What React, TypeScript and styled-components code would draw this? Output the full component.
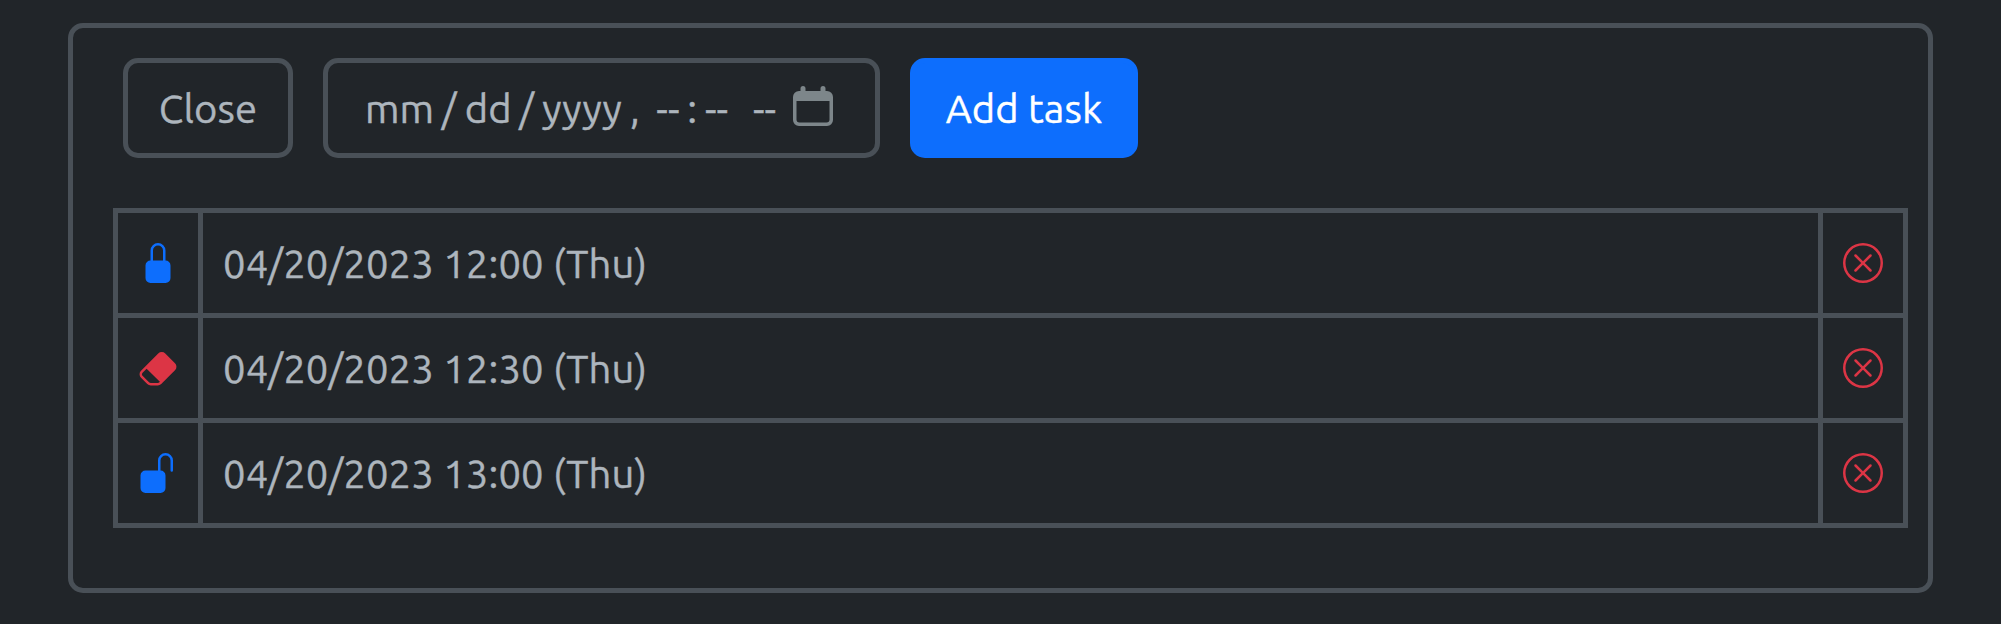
import React from "react";
import styled, { createGlobalStyle } from "styled-components";
import { BsEraserFill, BsLockFill, BsUnlockFill, BsXCircle } from "react-icons/bs";

const colors = {
  background: "#212529",
  border: "#495057",
  text: "#adb5bd",
  primary: "#0d6efd",
  danger: "#dc3545",
};

const GlobalStyle = createGlobalStyle`
  *, *::before, *::after { box-sizing: border-box; }
  body {
    margin: 0;
    background: ${colors.background};
    color: ${colors.text};
    font: 400 40px/60px Ubuntu, "Noto Sans", sans-serif;
    letter-spacing: 0.1px;
    -webkit-text-stroke: 0.4px currentColor;
  }
`;

const Page = styled.main`
  min-height: 624px;
  padding: 23px 68px 31px;
`;

const Panel = styled.section`
  height: 570px;
  padding: 30px 20px 0 40px;
  border: 5px solid ${colors.border};
  border-radius: 15px;
`;

const Toolbar = styled.div`
  display: flex;
  gap: 30px;
  height: 100px;
  margin: 0 0 50px 10px;
`;

const Button = styled.button<{ $primary?: boolean }>`
  width: ${(p) => (p.$primary ? 228 : 170)}px;
  padding: 1px 0 0;
  border: 5px solid ${(p) => (p.$primary ? colors.primary : colors.border)};
  border-radius: 15px;
  background: ${(p) => (p.$primary ? colors.primary : "transparent")};
  color: ${(p) => (p.$primary ? "#fff" : colors.text)};
  font: inherit;
  letter-spacing: inherit;
  white-space: nowrap;
`;

const DateField = styled.div`
  display: flex;
  align-items: center;
  width: 557px;
  padding: 1px 0 0 37px;
  border: 5px solid ${colors.border};
  border-radius: 15px;
`;

const Segment = styled.span<{ $width: number }>`
  flex: 0 0 ${(p) => p.$width}px;
  white-space: nowrap;
`;

const CalendarIcon = styled.svg`
  flex: none;
  width: 40px;
  height: 40px;
  margin-bottom: 5px;
  fill: #7d868a;
`;

const Table = styled.table`
  width: 1795px;
  border-collapse: collapse;
  table-layout: fixed;
`;

const Row = styled.tr`
  height: 105px;
`;

const Cell = styled.td`
  padding: 1px 0 0 20px;
  border: 5px solid ${colors.border};
  vertical-align: middle;
`;

const IconCell = styled(Cell)<{ $tone: "primary" | "danger" }>`
  width: 85px;
  padding-top: 0;
  color: ${(p) => colors[p.$tone]};

  svg {
    display: block;
    width: 40px;
    height: 40px;
  }
`;

const segments: [string, number][] = [
  ["mm", 76.7],
  ["/", 23],
  ["dd", 54.5],
  ["/", 23.1],
  ["yyyy", 87.7],
  [",", 26.3],
  ["--", 31],
  [":", 17.7],
  ["--", 48],
  ["--", 40],
];

const tasks = [
  { date: "04/20/2023 12:00 (Thu)", Icon: BsLockFill, tone: "primary" as const },
  { date: "04/20/2023 12:30 (Thu)", Icon: BsEraserFill, tone: "danger" as const },
  { date: "04/20/2023 13:00 (Thu)", Icon: BsUnlockFill, tone: "primary" as const },
];

export default function App() {
  return (
    <Page>
      <GlobalStyle />
      <Panel>
        <Toolbar>
          <Button>Close</Button>
          <DateField>
            {segments.map(([text, width], i) => (
              <Segment key={i} $width={width}>{text}</Segment>
            ))}
            <CalendarIcon viewBox="0 0 40 40">
              <path
                fillRule="evenodd"
                d="M7.5 5V2.5a2.5 2.5 0 0 1 5 0V5h15V2.5a2.5 2.5 0 0 1 5 0V5H34a6 6 0 0 1 6 6v23a6 6 0 0 1-6 6H6a6 6 0 0 1-6-6V11a6 6 0 0 1 6-6zM3.5 15v18.500a3 3 0 0 0 3 3h27a3 3 0 0 0 3-3V15z"
              />
            </CalendarIcon>
          </DateField>
          <Button $primary>Add task</Button>
        </Toolbar>
        <Table>
          <tbody>
            {tasks.map(({ date, Icon, tone }) => (
              <Row key={date}>
                <IconCell $tone={tone}><Icon /></IconCell>
                <Cell>{date}</Cell>
                <IconCell $tone="danger"><BsXCircle /></IconCell>
              </Row>
            ))}
          </tbody>
        </Table>
      </Panel>
    </Page>
  );
}
